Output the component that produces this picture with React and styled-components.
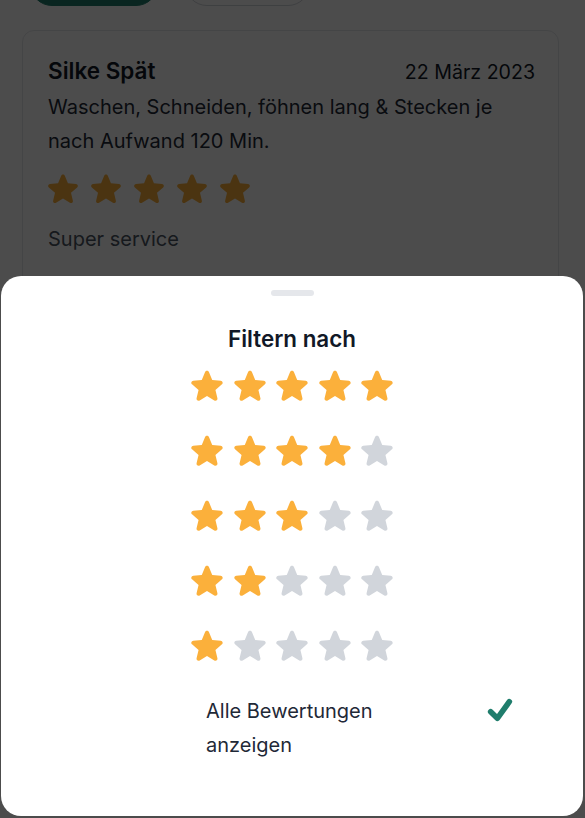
import styled, { createGlobalStyle } from "styled-components";

const GlobalStyle = createGlobalStyle`
  html, body {
    margin: 0;
    padding: 0;
    background: #ffffff;
    font-family: Inter, "Noto Sans", "Liberation Sans", sans-serif;
    overflow: hidden;
  }
  * { box-sizing: border-box; }
`;

const STAR =
  "M10.788 3.21c.448-1.077 1.976-1.077 2.424 0l2.082 5.006 5.404.434c1.164.093 1.636 1.545.749 2.305l-4.117 3.527 1.257 5.273c.271 1.136-.964 2.033-1.96 1.425L12 18.354 7.373 21.18c-.996.608-2.231-.29-1.96-1.425l1.257-5.273-4.117-3.527c-.887-.76-.415-2.212.749-2.305l5.404-.434 2.082-5.005Z";

const Page = styled.div`
  width: 585px;
  height: 818px;
  padding: 0 26px 0 22px;
`;

const ButtonRow = styled.div`
  display: flex;
  gap: 27px;
  padding-left: 8px;
  margin-top: -38px;
`;

const Pill = styled.button`
  height: 44px;
  width: ${(p) => p.$width}px;
  border-radius: 22px;
  border: 1px solid ${(p) => (p.$filled ? "#1f7d6c" : "#d1d5db")};
  background: ${(p) => (p.$filled ? "#1f7d6c" : "#ffffff")};
`;

const Card = styled.div`
  margin-top: 24px;
  border: 1px solid #e5e7eb;
  border-radius: 12px;
  padding: 26px 23px 30px 25px;
  height: 360px;
`;

const CardHead = styled.div`
  display: flex;
  justify-content: space-between;
  align-items: baseline;
  line-height: 28px;
`;

const Name = styled.span`
  font-size: 22.5px;
  font-weight: 600;
  color: #111827;
`;

const DateText = styled.span`
  font-size: 19.6px;
  color: #111827;
`;

const Description = styled.p`
  margin: 4px 0 0;
  font-size: 20px;
  line-height: 34px;
  color: #1f2937;
`;

const Stars = styled.div`
  display: flex;
  gap: ${(p) => p.$gap}px;
  margin: ${(p) => p.$margin || "0"};
`;

const Comment = styled.p`
  margin: 15px 0 0;
  font-size: 20px;
  line-height: 34px;
  color: #4b5563;
`;

const Overlay = styled.div`
  position: fixed;
  inset: 0;
  background: rgba(0, 0, 0, 0.7);
`;

const Sheet = styled.div`
  position: fixed;
  left: 1px;
  right: 2px;
  bottom: 2px;
  height: 540px;
  background: #ffffff;
  border-radius: 20px;
  display: flex;
  flex-direction: column;
  align-items: center;
`;

const Handle = styled.div`
  margin-top: 14px;
  width: 43px;
  height: 6px;
  border-radius: 3px;
  background: #e5e7eb;
`;

const Title = styled.h2`
  margin: 29px 0 0;
  font-size: 22.4px;
  line-height: 28px;
  font-weight: 600;
  color: #111827;
`;

const RatingList = styled.div`
  margin-top: 14px;
  display: flex;
  flex-direction: column;
  gap: 27px;
`;

const RatingButton = styled.button`
  border: none;
  background: none;
  padding: 0;
  cursor: pointer;
`;

const AllRow = styled.div`
  align-self: flex-start;
  margin: 29px 0 0 205px;
  width: 310px;
  display: flex;
  justify-content: space-between;
  align-items: flex-start;
`;

const AllLabel = styled.span`
  max-width: 210px;
  font-size: 20px;
  line-height: 34px;
  color: #1f2937;
`;

const Check = styled.svg`
  margin-top: 1px;
  flex-shrink: 0;
`;

const Star = ({ size, on }) => (
  <svg width={size} height={size} viewBox="0 0 24 24">
    <path d={STAR} fill={on ? "#fbb03b" : "#d1d5db"} />
  </svg>
);

const StarLine = ({ count, size, gap, margin }) => (
  <Stars $gap={gap} $margin={margin}>
    {[0, 1, 2, 3, 4].map((i) => (
      <Star key={i} size={size} on={i < count} />
    ))}
  </Stars>
);

export default function App() {
  return (
    <>
      <GlobalStyle />
      <Page>
        <ButtonRow>
          <Pill $filled $width={128} />
          <Pill $width={125} />
        </ButtonRow>
        <Card>
          <CardHead>
            <Name>Silke Spät</Name>
            <DateText>22 März 2023</DateText>
          </CardHead>
          <Description>
            Waschen, Schneiden, föhnen lang &amp; Stecken je nach Aufwand 120 Min.
          </Description>
          <StarLine count={5} size={36} gap={7} margin="13px 0 0 -3px" />
          <Comment>Super service</Comment>
        </Card>
      </Page>
      <Overlay />
      <Sheet>
        <Handle />
        <Title>Filtern nach</Title>
        <RatingList>
          {[5, 4, 3, 2, 1].map((n) => (
            <RatingButton key={n}>
              <StarLine count={n} size={38} gap={4.5} />
            </RatingButton>
          ))}
        </RatingList>
        <AllRow>
          <AllLabel>Alle Bewertungen anzeigen</AllLabel>
          <Check width="32" height="32" viewBox="0 0 24 24" fill="none">
            <path
              d="M5 12.5l5 5 9-12.5"
              stroke="#1f7d6c"
              strokeWidth="4.2"
              strokeLinecap="round"
              strokeLinejoin="round"
            />
          </Check>
        </AllRow>
      </Sheet>
    </>
  );
}
